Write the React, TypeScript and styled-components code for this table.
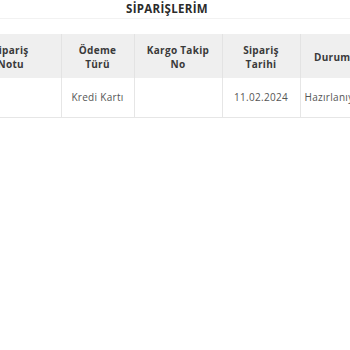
import styled, { createGlobalStyle } from 'styled-components';

const GlobalStyle = createGlobalStyle`
  html, body {
    margin: 0;
    padding: 0;
    background: #ffffff;
    overflow: hidden;
  }
  body {
    font-family: "Open Sans", "Noto Sans", sans-serif;
  }
`;

const Page = styled.div`
  width: 350px;
  height: 350px;
  overflow: hidden;
`;

const Title = styled.h2`
  margin: 0 0 15px 0;
  padding: 1px 16px 2px 0;
  height: 15px;
  font-size: 11.5px;
  line-height: 15px;
  font-weight: 700;
  color: #2b2b2b;
  text-align: center;
  letter-spacing: 0.3px;
  border-bottom: 1px solid #f2f2f2;
`;

const TableWrapper = styled.div`
  margin-left: -39px;
  width: 403px;
`;

const Table = styled.table`
  border-collapse: collapse;
  table-layout: fixed;
  width: 403px;
`;

const HeadCell = styled.th<{ $w: number }>`
  width: ${(p) => p.$w}px;
  height: 44px;
  padding: 2px 4px 0;
  box-sizing: border-box;
  background: #efefef;
  color: #3a3a3a;
  font-size: 10px;
  font-weight: 700;
  line-height: 14px;
  letter-spacing: 0.3px;
  text-align: center;
  vertical-align: middle;
  border-left: 1px solid #e3e3e3;
  &:first-child {
    border-left: none;
  }
`;

const HeadLine = styled.span`
  display: block;
  white-space: nowrap;
`;

const Cell = styled.td`
  height: 39px;
  padding: 0 4px;
  box-sizing: border-box;
  color: #555555;
  font-size: 10px;
  font-weight: 400;
  letter-spacing: 0.3px;
  text-align: center;
  white-space: nowrap;
  border-left: 1px solid #e6e6e6;
  border-bottom: 1px solid #e6e6e6;
  &:first-child {
    border-left: none;
  }
`;

const columns = [
  { label: ['Sipariş', 'Notu'], w: 100 },
  { label: ['Ödeme', 'Türü'], w: 73 },
  { label: ['Kargo Takip', 'No'], w: 88 },
  { label: ['Sipariş', 'Tarihi'], w: 78 },
  { label: ['Durum'], w: 64 },
];

const orders = [
  { note: '', payment: 'Kredi Kartı', tracking: '', date: '11.02.2024', status: 'Hazırlanıyor' },
];

const App = () => {
  return (
    <Page>
      <GlobalStyle />
      <Title>SİPARİŞLERİM</Title>
      <TableWrapper>
        <Table>
          <thead>
            <tr>
              {columns.map((c) => (
                <HeadCell key={c.label.join(' ')} $w={c.w}>
                  {c.label.map((line) => (
                    <HeadLine key={line}>{line}</HeadLine>
                  ))}
                </HeadCell>
              ))}
            </tr>
          </thead>
          <tbody>
            {orders.map((o, i) => (
              <tr key={i}>
                <Cell>{o.note}</Cell>
                <Cell>{o.payment}</Cell>
                <Cell>{o.tracking}</Cell>
                <Cell>{o.date}</Cell>
                <Cell>{o.status}</Cell>
              </tr>
            ))}
          </tbody>
        </Table>
      </TableWrapper>
    </Page>
  );
};

export default App;
